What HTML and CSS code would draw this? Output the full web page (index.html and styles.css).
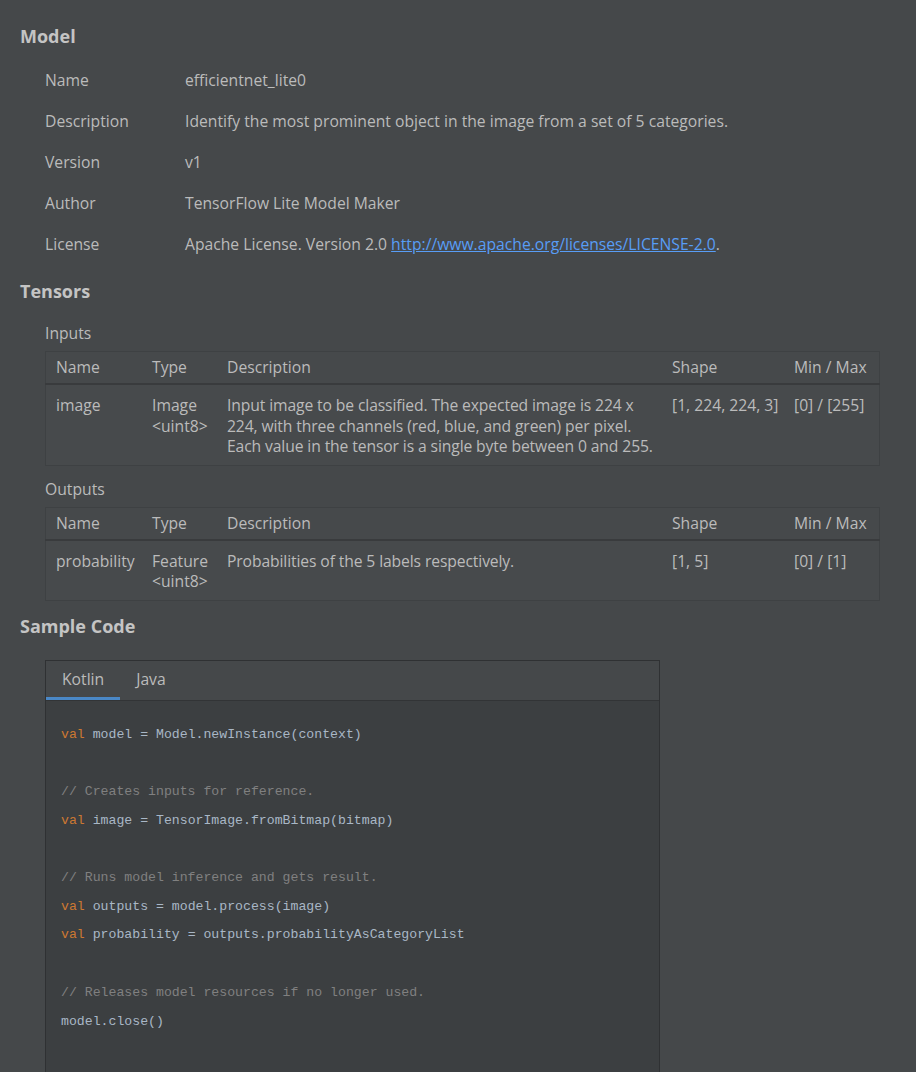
FILE: index.html
```html
<!DOCTYPE html>
<html>
<head>
<meta charset="utf-8">
<link rel="stylesheet" href="styles.css">
</head>
<body>
<div class="page">
  <h2 class="section-title">Model</h2>
  <div class="props">
    <div class="prop"><div class="prop-k">Name</div><div class="prop-v">efficientnet_lite0</div></div>
    <div class="prop"><div class="prop-k">Description</div><div class="prop-v">Identify the most prominent object in the image from a set of 5 categories.</div></div>
    <div class="prop"><div class="prop-k">Version</div><div class="prop-v">v1</div></div>
    <div class="prop"><div class="prop-k">Author</div><div class="prop-v">TensorFlow Lite Model Maker</div></div>
    <div class="prop"><div class="prop-k">License</div><div class="prop-v">Apache License. Version 2.0 <a class="link" href="#">http://www.apache.org/licenses/LICENSE-2.0</a>.</div></div>
  </div>

  <h2 class="section-title tensors-title">Tensors</h2>
  <div class="sub-title">Inputs</div>
  <table class="tensor-table">
    <thead>
      <tr><th class="c-name">Name</th><th class="c-type">Type</th><th class="c-desc">Description</th><th class="c-shape">Shape</th><th class="c-mm">Min / Max</th></tr>
    </thead>
    <tbody>
      <tr>
        <td>image</td>
        <td>Image<br>&lt;uint8&gt;</td>
        <td class="desc">Input image to be classified. The expected image is 224 x 224, with three channels (red, blue, and green) per pixel. Each value in the tensor is a single byte between 0 and 255.</td>
        <td>[1, 224, 224, 3]</td>
        <td>[0] / [255]</td>
      </tr>
    </tbody>
  </table>

  <div class="sub-title">Outputs</div>
  <table class="tensor-table">
    <thead>
      <tr><th class="c-name">Name</th><th class="c-type">Type</th><th class="c-desc">Description</th><th class="c-shape">Shape</th><th class="c-mm">Min / Max</th></tr>
    </thead>
    <tbody>
      <tr>
        <td>probability</td>
        <td>Feature<br>&lt;uint8&gt;</td>
        <td class="desc">Probabilities of the 5 labels respectively.</td>
        <td>[1, 5]</td>
        <td>[0] / [1]</td>
      </tr>
    </tbody>
  </table>

  <h2 class="section-title code-title">Sample Code</h2>
  <div class="code-box">
    <div class="tabs">
      <div class="tab active">Kotlin</div>
      <div class="tab">Java</div>
    </div>
    <div class="code">
<div class="ln"><span class="kw">val</span> model = Model.newInstance(context)</div>
<div class="ln">&nbsp;</div>
<div class="ln cm">// Creates inputs for reference.</div>
<div class="ln"><span class="kw">val</span> image = TensorImage.fromBitmap(bitmap)</div>
<div class="ln">&nbsp;</div>
<div class="ln cm">// Runs model inference and gets result.</div>
<div class="ln"><span class="kw">val</span> outputs = model.process(image)</div>
<div class="ln"><span class="kw">val</span> probability = outputs.probabilityAsCategoryList</div>
<div class="ln">&nbsp;</div>
<div class="ln cm">// Releases model resources if no longer used.</div>
<div class="ln">model.close()</div>
<div class="ln">&nbsp;</div>
<div class="ln">&nbsp;</div>
    </div>
  </div>
</div>
</body>
</html>
```
FILE: styles.css
```css
html, body {
  margin: 0;
  padding: 0;
  background: #45484a;
}
body {
  font-family: "Open Sans", "Noto Sans", sans-serif;
  font-size: 15.7px;
  color: #bbbbbb;
}
.page {
  padding: 22px 36px 0 20px;
}
.section-title {
  margin: 0;
  font-size: 18px;
  font-weight: 700;
  color: #c4c4c4;
  line-height: 28px;
}
.props {
  display: flex;
  flex-direction: column;
  padding-left: 25px;
  margin-top: 20px;
  gap: 20px;
}
.prop {
  display: flex;
  line-height: 21px;
}
.prop-k {
  width: 140px;
  flex: none;
}
.link {
  color: #589df6;
  text-decoration: underline;
}
.tensors-title {
  margin-top: 22px;
}
.sub-title {
  margin: 18px 0 8px 25px;
  line-height: 20px;
}
.tensor-table {
  margin-left: 25px;
  width: 835px;
  border-collapse: collapse;
  background: #474a4c;
  border: 1px solid #3e4143;
  table-layout: fixed;
}
.tensor-table th {
  font-weight: 400;
  text-align: left;
  padding: 5px 2px 6px 10px;
  line-height: 20px;
  border-bottom: 2px solid #393b3d;
  background: #46494b;
}
.tensor-table td {
  vertical-align: top;
  padding: 10px 2px 8px 10px;
  line-height: 20.5px;
}
.tensor-table td.desc {
  padding-right: 0;
  letter-spacing: -0.12px;
}
.c-name { width: 84px; }
.c-type { width: 63px; }
.c-desc { width: 433px; }
.c-shape { width: 110px; }
.tensor-table + .sub-title { margin-top: 13px; }
.code-title {
  margin-top: 11px;
}
.code-box {
  margin: 20px 0 0 25px;
  width: 613px;
  border: 1px solid #2f3133;
  border-bottom: none;
  background: #3c3f41;
}
.tabs {
  display: flex;
  background: #45484a;
  border-bottom: 1px solid #323436;
  height: 39px;
}
.tab {
  padding: 0 16px;
  line-height: 36px;
  height: 36px;
  border-bottom: 3px solid transparent;
  color: #bbbbbb;
}
.tab.active {
  border-bottom-color: #4a88c7;
}
.code {
  padding: 20px 15px 0 15px;
  font-family: "Liberation Mono", "DejaVu Sans Mono", monospace;
  font-size: 13.2px;
  color: #a9b7c6;
}
.ln {
  line-height: 28.7px;
  white-space: pre;
}
.kw { color: #cc7832; }
.cm { color: #808080; }
```
